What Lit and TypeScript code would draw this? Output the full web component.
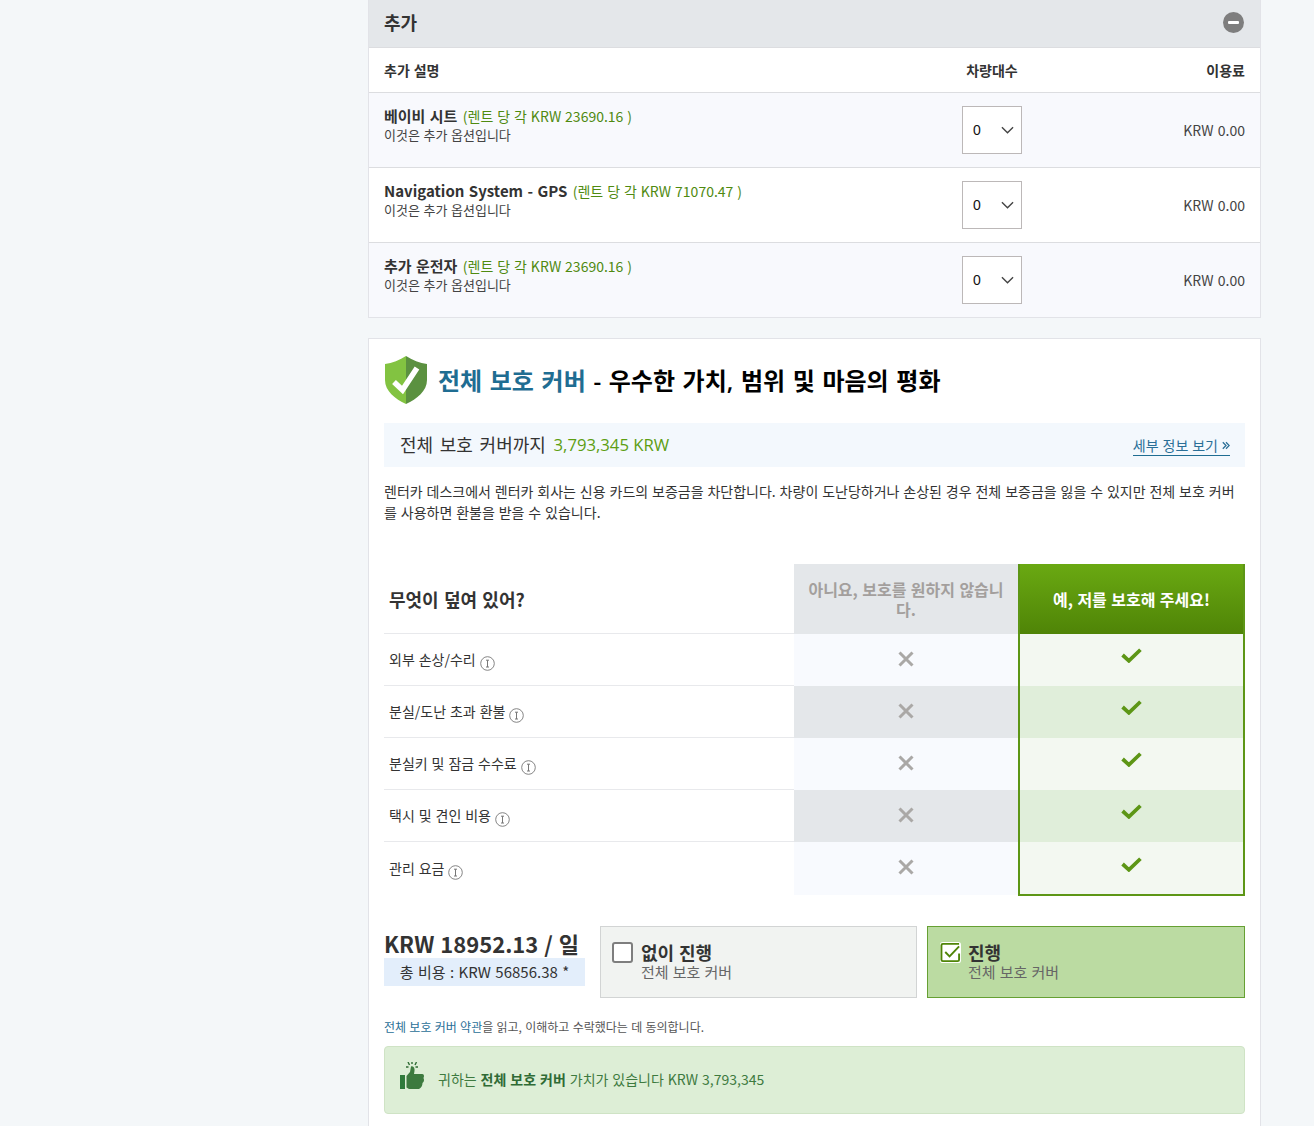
import { LitElement, html, css, svg } from "lit";
import { customElement } from "lit/decorators.js";

const addons = [
  { name: "베이비 시트", price: "KRW 23690.16", alt: true },
  { name: "Navigation System - GPS", price: "KRW 71070.47", alt: false },
  { name: "추가 운전자", price: "KRW 23690.16", alt: true },
];
const rows = ["외부 손상/수리", "분실/도난 초과 환불", "분실키 및 잠금 수수료", "택시 및 견인 비용", "관리 요금"];

const cross = svg`<svg class="x" viewBox="0 0 16 16" width="16" height="16"><path d="M1.5 1.5 L14.5 14.5 M14.5 1.5 L1.5 14.5" stroke="#aaa8a6" stroke-width="3" fill="none"/></svg>`;
const tick = svg`<svg class="t" viewBox="0 0 20 15" width="21" height="16"><path d="M1.5 7.5 L7.5 13 L18.5 2.5" stroke="#5d9616" stroke-width="3.6" fill="none"/></svg>`;
const info = svg`<svg class="i" viewBox="0 0 15 15" width="15" height="15"><circle cx="7.5" cy="7.5" r="6.8" fill="none" stroke="#777" stroke-width="0.9"/><path d="M6 4.2 H9 M7.5 4.2 V11 M6 11 H9" stroke="#777" stroke-width="1" fill="none"/></svg>`;
const chevron = svg`<svg viewBox="0 0 14 8" width="13" height="8"><path d="M1 1 L7 7 L13 1" stroke="#444" stroke-width="1.5" fill="none"/></svg>`;

@customElement("app-root")
export class AppRoot extends LitElement {
  static styles = css`
    :host {
      display: block;
      height: 1126px;
      overflow: hidden;
      box-sizing: border-box;
      background: #f4f7f9;
      padding-left: 368px;
      font-family: "Noto Sans CJK KR", "Noto Sans", sans-serif;
      word-spacing: 0.8px;
      color: #333;
    }
    .wrap { width: 893px; }
    .panel { border: 1px solid #e2e3e8; border-top: 0; background: #fff; }
    .phead {
      height: 47px; background: #e4e7ea; display: flex; align-items: center;
      justify-content: space-between; padding: 0 15px; border-bottom: 1px solid #dcdde0;
      font-size: 18px; font-weight: 700; color: #333;
    }
    .phead > span:first-child { margin-bottom: 4px; }
    .minus { width: 21px; height: 21px; border-radius: 50%; background: #7e7e7e; display: flex; align-items: center; justify-content: center; margin: 0 1px 2px 0; }
    .minus i { width: 11px; height: 3px; background: #fff; border-radius: 1px; display: block; }
    .thead {
      height: 44px; display: grid; grid-template-columns: 1fr 60px 223px;
      align-items: center; padding: 0 15px; border-bottom: 1px solid #dcdde0;
      font-size: 14px; font-weight: 700; line-height: 20px;
    }
    .thead .q { text-align: center; white-space: nowrap; }
    .thead .f { text-align: right; }
    .row {
      height: 74px; display: grid; grid-template-columns: 1fr 60px 223px;
      padding: 0 15px; border-bottom: 1px solid #dcdde0; background: #fff;
    }
    .row:last-child { border-bottom: 0; }
    .row.alt { background: #f8f9fd; }
    .desc { padding-top: 13px; font-size: 13px; line-height: 17px; color: #444; word-spacing: 0.7px; }
    .desc .top { font-size: 15px; line-height: 20px; white-space: nowrap; word-spacing: 1px; }
    .desc b { font-weight: 700; color: #333; }
    .desc .p { font-size: 14px; color: #4f8a10; margin-left: 1px; word-spacing: 0.8px; }
    .sel {
      margin-top: 13px; width: 60px; height: 48px; box-sizing: border-box;
      border: 1px solid #bcb8b8; background: #fff; display: flex; align-items: center;
      justify-content: space-between; padding: 0 7px 0 10px;
      font-family: "Liberation Sans", sans-serif; font-size: 14px; color: #111;
    }
    .fee { text-align: right; font-size: 14px; color: #444; padding-top: 27px; line-height: 20px; white-space: nowrap; word-spacing: 1px; }

    .card { margin-top: 20px; border: 1px solid #e2e3e8; background: #fff; padding: 0 15px 40px; }
    .title { display: flex; align-items: center; height: 84px; gap: 11px; }
    .title .ttl { font-family: "Open Sans", "Noto Sans CJK KR", sans-serif; font-size: 24px; font-weight: 600; color: #000; white-space: nowrap; line-height: 30px; word-spacing: 1.4px; }
    .ttl span { color: #1f6d92; }
    .shield { margin: -2px 0 0 1px; display: block; }
    .limit {
      height: 44px; background: #f3f8fd; display: flex; align-items: center;
      justify-content: space-between; padding: 0 15px 0 16px;
    }
    .limit .l { font-family: "Open Sans", "Noto Sans CJK KR", sans-serif; font-size: 18px; color: #333; word-spacing: 2px; margin-bottom: 2px; }
    .limit .l span { color: #5d9e12; font-size: 16.7px; word-spacing: 0; margin-left: 1px; position: relative; top: -1px; }
    .limit a {
      font-size: 14px; color: #2a6f97; border-bottom: 1px solid #1f6d92; line-height: 19px;
      margin-top: 2px; display: flex; align-items: center; gap: 4px;
    }
    .para { margin: 14px 0 0; font-size: 14px; line-height: 21px; color: #333; height: 42px; word-spacing: 0.75px; }

    .grid {
      margin-top: 41px; display: grid; grid-template-columns: 410px 224px 227px;
      grid-template-rows: 70px repeat(4, 52px) 53px;
    }
    .c1 { display: flex; align-items: center; padding-left: 5px; border-bottom: 1px solid #e8e9ec; font-size: 14px; color: #333; gap: 4px; }
    .c1.h { font-size: 18px; font-weight: 700; word-spacing: 1.2px; }
    .c1.last { border-bottom: 0; }
    .c1 .lbl { position: relative; top: -1px; }
    .c1 .i { position: relative; top: 4px; }
    .c2 { display: flex; align-items: center; justify-content: center; background: #f8fafe; padding: 0 1px 2px 0; box-sizing: border-box; }
    .c2.alt { background: #e4e7ea; }
    .c2.last { padding-bottom: 3px; }
    .c2.h { background: #e4e7ea; color: #a39f9d; font-weight: 700; font-size: 16px; line-height: 20px; text-align: center; padding: 0 12px; }
    .c3 {
      display: flex; align-items: center; justify-content: center; background: #f3f8f1;
      border-left: 2px solid #5d9616; border-right: 2px solid #5d9616; padding: 0 1px 10px 0; box-sizing: border-box;
    }
    .c3.alt { background: #e0eeda; }
    .c3.h {
      background: linear-gradient(#6aa912, #4f8407); color: #fff; font-weight: 700; font-size: 16px; padding: 0;
    }
    .c3.last { border-bottom: 2px solid #5d9616; margin-bottom: -1px; padding-bottom: 9px; }
    .cta { margin-top: 31px; display: grid; grid-template-columns: 201px 332px 328px; }
    .price { width: 201px; }
    .amt { font-size: 22px; font-weight: 700; line-height: 32px; color: #333; white-space: nowrap; margin-top: 1px; word-spacing: 1px; }
    .tot { background: #e3eefb; height: 28px; line-height: 28px; text-align: center; font-size: 15px; color: #333; white-space: nowrap; margin-top: -1px; word-spacing: 1px; }
    .opt {
      height: 72px; box-sizing: border-box; border: 1px solid #d2d4d4; background: #f1f3f1;
      display: flex; padding: 15px 0 0 11px; gap: 8px; margin-left: 15px;
    }
    .opt.on { background: #bbdba2; border-color: #66a033; margin-left: 10px; padding-left: 12px; gap: 7px; }
    .box { width: 21px; height: 21px; box-sizing: border-box; border-radius: 3px; border: 2px solid #7e7e7e; background: #fff; flex: none; }
    .chk { flex: none; display: block; }
    .lab { margin-top: -1px; }
    .opt b { display: block; font-size: 18px; line-height: 22px; color: #333; font-weight: 700; }
    .opt small { display: block; font-size: 15px; line-height: 17px; color: #666; word-spacing: 0.8px; }
    .terms { margin-top: 20px; font-size: 12px; line-height: 18px; color: #555; word-spacing: 0.6px; }
    .terms span { color: #2a6f97; }
    .value {
      margin-top: 10px; height: 68px; box-sizing: border-box; border: 1px solid #cfe3c5; border-radius: 4px;
      background: #ddeed6; display: flex; align-items: center; padding: 0 13px 0 14px; gap: 13px;
      font-size: 14px; color: #3d7a3f;
    }
    .value > span { margin-bottom: 2px; }
    .value b { font-weight: 700; color: #2f6b35; }
    .thumb { display: block; margin-top: -10px; }
  `;

  render() {
    return html`<div class="wrap">
      <section class="panel">
        <div class="phead"><span>추가</span><span class="minus"><i></i></span></div>
        <div class="thead"><span>추가 설명</span><span class="q">차량대수</span><span class="f">이용료</span></div>
        ${addons.map(a => html`<div class="row ${a.alt ? "alt" : ""}">
          <div class="desc">
            <div class="top"><b>${a.name}</b> <span class="p">(렌트 당 각 ${a.price} )</span></div>
            <div>이것은 추가 옵션입니다</div>
          </div>
          <div class="sel"><span>0</span>${chevron}</div>
          <div class="fee">KRW 0.00</div>
        </div>`)}
      </section>

      <section class="card">
        <div class="title">
          <svg class="shield" viewBox="0 0 42 48" width="42" height="48">
            <path d="M21 0 C15 4 7 7 0 8 V24 C0 35 10 43 21 48 Z" fill="#82c341"/>
            <path d="M21 0 C27 4 35 7 42 8 V24 C42 35 32 43 21 48 Z" fill="#5b9140"/>
            <path d="M9 26 L17.5 34 L32 12" stroke="#fff" stroke-width="5.5" fill="none"/>
          </svg>
          <div class="ttl"><span>전체 보호 커버</span> - 우수한 가치, 범위 및 마음의 평화</div>
        </div>
        <div class="limit">
          <div class="l">전체 보호 커버까지 <span>3,793,345 KRW</span></div>
          <a>세부 정보 보기 <svg viewBox="0 0 10 10" width="8" height="9"><path d="M1 1 L5 5 L1 9 M5 1 L9 5 L5 9" stroke="#2a6f97" stroke-width="1.6" fill="none"/></svg></a>
        </div>
        <p class="para">렌터카 데스크에서 렌터카 회사는 신용 카드의 보증금을 차단합니다. 차량이 도난당하거나 손상된 경우 전체 보증금을 잃을 수 있지만 전체 보호 커버를 사용하면 환불을 받을 수 있습니다.</p>

        <div class="grid">
          <div class="c1 h">무엇이 덮여 있어?</div>
          <div class="c2 h">아니요, 보호를 원하지 않습니다.</div>
          <div class="c3 h">예, 저를 보호해 주세요!</div>
          ${rows.map((r, i) => html`
            <div class="c1 ${i === 4 ? "last" : ""}"><span class="lbl">${r}</span>${info}</div>
            <div class="c2 ${i % 2 ? "alt" : ""} ${i === 4 ? "last" : ""}">${cross}</div>
            <div class="c3 ${i % 2 ? "alt" : ""} ${i === 4 ? "last" : ""}">${tick}</div>`)}
        </div>

        <div class="cta">
          <div class="price">
            <div class="amt">KRW 18952.13 / 일</div>
            <div class="tot">총 비용 : KRW 56856.38 *</div>
          </div>
          <div class="opt"><span class="box"></span><div class="lab"><b>없이 진행</b><small>전체 보호 커버</small></div></div>
          <div class="opt on">
            <svg class="chk" viewBox="0 0 22 22" width="21" height="21">
              <rect x="0" y="0" width="22" height="22" rx="3" fill="#fff"/>
              <path d="M20 2 H3 Q1.5 2 1.5 3.5 V18.5 Q1.5 20 3 20 H18.5 Q20 20 20 18.5 V12" stroke="#4f8407" stroke-width="2" fill="none"/>
              <path d="M5.5 10.5 L10 15 L20 4.5" stroke="#4f8407" stroke-width="2" fill="none"/>
            </svg>
            <div class="lab"><b>진행</b><small>전체 보호 커버</small></div>
          </div>
        </div>
        <div class="terms"><span>전체 보호 커버 약관</span>을 읽고, 이해하고 수락했다는 데 동의합니다.</div>
        <div class="value">
          <svg class="thumb" viewBox="0 0 26 27" width="26" height="27">
            <path d="M9 0 L10.5 3 M13 0 V2 M17.5 0 L16 3 M7 5 H9.5 M16.5 5 H19" stroke="#2f6b35" stroke-width="1.4" fill="none"/>
            <rect x="1" y="13" width="5" height="14" fill="#2f7a3b"/>
            <path d="M7.5 14 L11 10 L12 4.5 C14.5 3.5 16 6 15.5 9 L15 12 H23 C25 12 25.5 14 24.5 16 C25.5 18 25 20 23.5 21 C23.5 24 22 26 20 27 H10 L7.5 25.5 Z" fill="#3d7a3f"/>
          </svg>
          <span>귀하는 <b>전체 보호 커버</b> 가치가 있습니다 KRW 3,793,345</span>
        </div>
      </section>
    </div>`;
  }
}
